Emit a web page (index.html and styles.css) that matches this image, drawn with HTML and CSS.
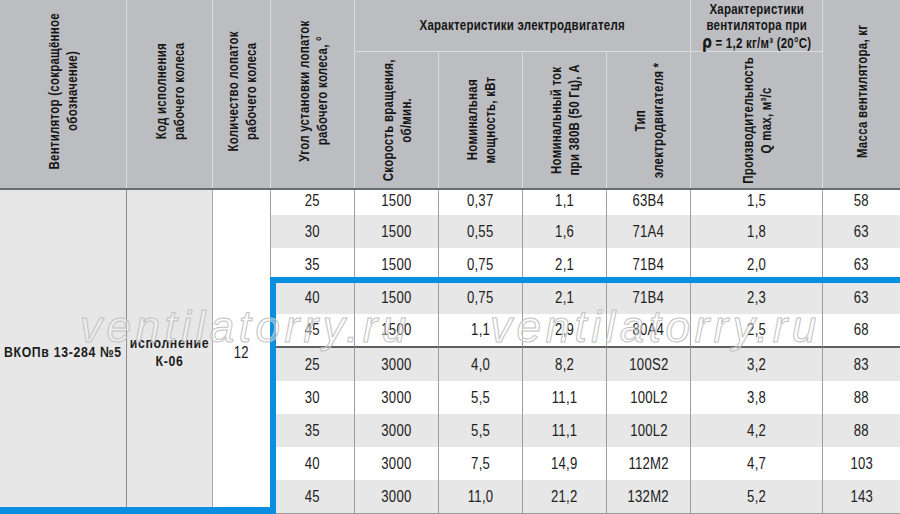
FILE: index.html
```html
<!DOCTYPE html>
<html lang="ru">
<head>
<meta charset="utf-8">
<title>ВКОПв 13-284 №5</title>
<link rel="stylesheet" href="styles.css">
</head>
<body>
<div class="sheet">
  <div class="head">
    <div class="hc full x1"><span class="vt">Вентилятор (сокращённое<br>обозначение)</span></div>
    <div class="hc full x2"><span class="vt">Код исполнения<br>рабочего колеса</span></div>
    <div class="hc full x3"><span class="vt">Количество лопаток<br>рабочего колеса</span></div>
    <div class="hc full x4"><span class="vt">Угол установки лопаток<br>рабочего колеса, °</span></div>
    <div class="hc group"><span class="hz">Характеристики электродвигателя</span></div>
    <div class="hc group9"><span class="hz">Характеристики<br>вентилятора при<br><span class="rho">ρ</span> = 1,2 кг/м³ (20°C)</span></div>
    <div class="hc full x10"><span class="vt">Масса вентилятора, кг</span></div>
    <div class="hc sub x5"><span class="vt">Скорость вращения,<br>об/мин.</span></div>
    <div class="hc sub x6"><span class="vt">Номинальная<br>мощность, кВт</span></div>
    <div class="hc sub x7"><span class="vt">Номинальный ток<br>при 380В (50 Гц), А</span></div>
    <div class="hc sub x8"><span class="vt">Тип<br>электродвигателя *</span></div>
    <div class="hc sub x9"><span class="vt">Производительность<br>Q max, м³/с</span></div>
  </div>
  <div class="body">
    <div class="m m1"><span>ВКОПв 13-284 №5</span></div>
    <div class="m m2"><span>исполнение<br>К-06</span></div>
    <div class="m m3"><span>12</span></div>
    <div class="r first"><div><span>25</span></div><div><span>1500</span></div><div><span>0,37</span></div><div><span>1,1</span></div><div><span>63B4</span></div><div><span>1,5</span></div><div><span>58</span></div></div>
    <div class="r g"><div><span>30</span></div><div><span>1500</span></div><div><span>0,55</span></div><div><span>1,6</span></div><div><span>71A4</span></div><div><span>1,8</span></div><div><span>63</span></div></div>
    <div class="r"><div><span>35</span></div><div><span>1500</span></div><div><span>0,75</span></div><div><span>2,1</span></div><div><span>71B4</span></div><div><span>2,0</span></div><div><span>63</span></div></div>
    <div class="r g"><div><span>40</span></div><div><span>1500</span></div><div><span>0,75</span></div><div><span>2,1</span></div><div><span>71B4</span></div><div><span>2,3</span></div><div><span>63</span></div></div>
    <div class="r sep"><div><span>45</span></div><div><span>1500</span></div><div><span>1,1</span></div><div><span>2,9</span></div><div><span>80A4</span></div><div><span>2,5</span></div><div><span>68</span></div></div>
    <div class="r g"><div><span>25</span></div><div><span>3000</span></div><div><span>4,0</span></div><div><span>8,2</span></div><div><span>100S2</span></div><div><span>3,2</span></div><div><span>83</span></div></div>
    <div class="r"><div><span>30</span></div><div><span>3000</span></div><div><span>5,5</span></div><div><span>11,1</span></div><div><span>100L2</span></div><div><span>3,8</span></div><div><span>88</span></div></div>
    <div class="r g"><div><span>35</span></div><div><span>3000</span></div><div><span>5,5</span></div><div><span>11,1</span></div><div><span>100L2</span></div><div><span>4,2</span></div><div><span>88</span></div></div>
    <div class="r"><div><span>40</span></div><div><span>3000</span></div><div><span>7,5</span></div><div><span>14,9</span></div><div><span>112M2</span></div><div><span>4,7</span></div><div><span>103</span></div></div>
    <div class="r g"><div><span>45</span></div><div><span>3000</span></div><div><span>11,0</span></div><div><span>21,2</span></div><div><span>132M2</span></div><div><span>5,2</span></div><div><span>143</span></div></div>
  </div>
  <div class="blue bt"></div>
  <div class="blue bl"></div>
  <div class="blue bb"></div>
  <div class="wm wm1">ventilatorry.ru</div>
  <div class="wm wm2">ventilatorry.ru</div>
</div>
</body>
</html>
```
FILE: styles.css
```css
body {
  margin: 0;
  background: #ffffff;
}

.sheet {
  position: relative;
  width: 900px;
  height: 514px;
  overflow: hidden;
  font-family: "Liberation Sans", Arial, sans-serif;
  color: #222222;
}

.head,
.body {
  display: grid;
  grid-template-columns: 126px 86px 58px 84px 84px 84px 84px 84px 132px 78px;
}

.head {
  grid-template-rows: 52px 136px;
  background: #bcbdc0;
  border-bottom: 2px solid #6b6c6e;
}

.hc {
  display: flex;
  align-items: center;
  justify-content: center;
  border-left: 1px solid #dadbdc;
  font-weight: bold;
  font-size: 14px;
  letter-spacing: 0.3px;
  text-align: center;
  color: #161616;
}

.full {
  grid-row: 1 / 3;
  padding-bottom: 6px;
}

.sub {
  grid-row: 2;
}

.x1 { grid-column: 1; border-left: none; }
.x2 { grid-column: 2; }
.x3 { grid-column: 3; }
.x4 { grid-column: 4; }
.x5 { grid-column: 5; }
.x6 { grid-column: 6; }
.x7 { grid-column: 7; }
.x8 { grid-column: 8; }
.x9 { grid-column: 9; }
.x10 { grid-column: 10; }

.group {
  grid-row: 1;
  grid-column: 5 / 9;
  border-bottom: 1px solid #dadbdc;
}

.group9 {
  grid-row: 1;
  grid-column: 9;
  border-bottom: 1px solid #dadbdc;
}

.hz {
  display: inline-block;
  white-space: nowrap;
  line-height: 16.5px;
  transform: scaleX(0.82);
}

.group9 .hz {
  padding-top: 1px;
}

.rho {
  font-family: "DejaVu Sans", sans-serif;
  font-size: 17px;
  font-weight: bold;
  letter-spacing: 0;
}

.vt {
  writing-mode: vertical-rl;
  transform: rotate(180deg) scaleY(0.82);
  line-height: 18px;
  white-space: nowrap;
}

.body {
  grid-template-rows: 25px 33px 33px 33px 34px 33px 33px 33px 33px 33px;
  border-bottom: 1px solid #9d9d9d;
}

.m {
  grid-row: 1 / 11;
  display: flex;
  align-items: center;
  justify-content: center;
  text-align: center;
  background: #e6e7e6;
  font-weight: bold;
  font-size: 15px;
  letter-spacing: 0.8px;
  line-height: 18px;
  color: #1d1d1d;
}

.m span,
.r span {
  display: inline-block;
  white-space: nowrap;
  transform: scaleX(0.82);
}

.m1 { grid-column: 1; }
.m2 { grid-column: 2; border-left: 1px solid #8c8c8c; }
.m3 {
  grid-column: 3;
  background: #ffffff;
  border-left: 1px solid #a8a8a8;
  font-weight: normal;
  font-size: 16px;
  letter-spacing: 0.3px;
  padding-top: 2px;
}

.r {
  display: contents;
}

.r > div {
  display: flex;
  align-items: center;
  justify-content: center;
  border-left: 1px solid #9d9d9d;
  background: #ffffff;
  font-size: 16px;
  letter-spacing: 0.3px;
}

.r.first > div {
  padding-bottom: 3px;
}

.r.g > div {
  background: #e6e7e6;
}

.r.sep > div {
  border-bottom: 2px solid #5e5f61;
}

.blue {
  position: absolute;
  background: #0a8fe0;
}

.bt { left: 270px; top: 277px; width: 630px; height: 6px; }
.bl { left: 270px; top: 277px; width: 6px; height: 237px; }
.bb { left: 0; top: 507px; width: 276px; height: 7px; }

.wm {
  position: absolute;
  top: 305px;
  font-family: "Liberation Sans", sans-serif;
  font-style: italic;
  font-size: 44px;
  line-height: 1;
  letter-spacing: 4.5px;
  white-space: nowrap;
  color: rgba(255, 255, 255, 0.35);
  -webkit-text-stroke: 1px #c2c2c2;
  pointer-events: none;
}

.wm1 { left: 80px; }
.wm2 { left: 490px; }
```
